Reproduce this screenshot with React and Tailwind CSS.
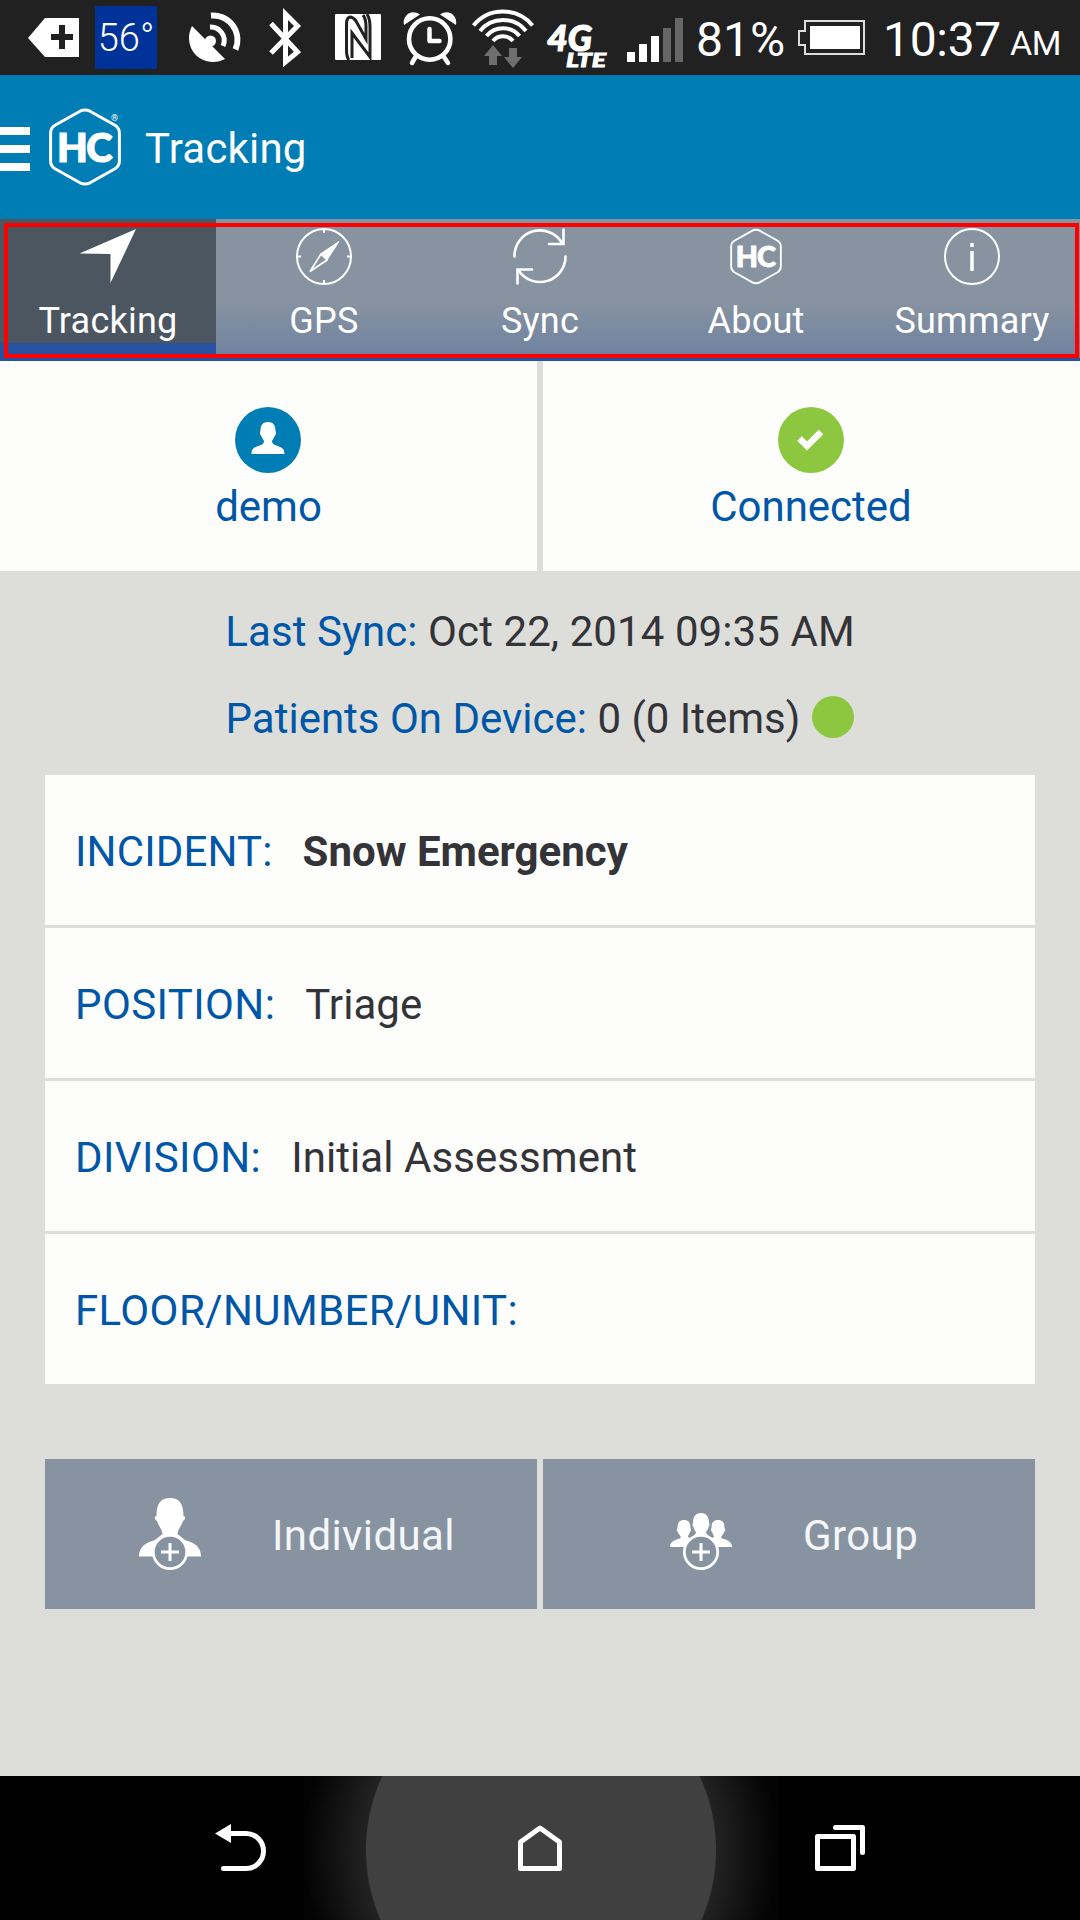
const Hex = ({ className, stroke, cls }) => (
  <svg className={className} viewBox="0 0 72 78" fill="none" stroke="white">
    <path
      strokeWidth={stroke}
      strokeLinejoin="round"
      d="M31 3.2 Q36 .6 41 3.2 L66 17.2 Q70.4 20 70.4 25 V53 Q70.4 58 66 60.8 L41 74.8 Q36 77.4 31 74.8 L6 60.8 Q1.6 58 1.6 53 V25 Q1.6 20 6 17.2 Z"
    />
    <text x="8" y="53.5" fontSize="39" textLength="54" lengthAdjust="spacingAndGlyphs" fill="white" stroke="white" strokeWidth="1.200" className={cls}>HC</text>
  </svg>
);

const letter = "font-['Lato',sans-serif] font-black tracking-[-1.5px]";

function StatusBar() {
  return (
    <div className="flex h-[75px] shrink-0 bg-[#212121] text-white">
      <svg className="h-[75px] w-[95px]" viewBox="0 0 95 75">
        <path fill="white" d="M28 38 L45 18 H79 V57 H45 Z" />
        <path stroke="#212121" strokeWidth="6" strokeLinecap="butt" d="M62 25 V49 M51 37 H73" />
      </svg>
      <div className="mt-[6px] flex h-[63px] w-[62px] items-center justify-center bg-[#003399] pt-[1px] text-[38px] leading-none font-light">56°</div>
      <svg className="h-[75px] w-[90px]" viewBox="157 0 90 75" fill="none" stroke="white">
        <path fill="white" stroke="none" d="M192 26 L207 41 L225 59 C214 65 199 62 192 50 C188 42 188 34 192 26 Z" />
        <circle cx="210.500" cy="41" r="5.500" fill="white" stroke="none" />
        <path strokeWidth="5" d="M210 27 A13.500 13.500 0 0 1 223 46" />
        <path strokeWidth="6" d="M211 15.500 A24.500 24.500 0 0 1 235.500 49.500" />
      </svg>
      <svg className="h-[75px] w-[75px]" viewBox="247 0 75 75" fill="none" stroke="white">
        <path strokeWidth="5" d="M271 23.500 L297.500 52 L285.500 62 V14 L297.500 26 L271 53" />
      </svg>
      <svg className="h-[75px] w-[72px]" viewBox="322 0 72 75">
        <rect x="335" y="14" width="46" height="46" rx="1" fill="white" />
        <path fill="none" stroke="#212121" strokeWidth="3" d="M349 60 Q346.500 57 346.500 50 V24 Q346.500 18 350 17 Q353 17 356 21 L366 39 V26 Q366 19 363 15 M367 14 Q370 19 370 26 V57 L352 33 V58" />
      </svg>
      <svg className="h-[75px] w-[72px]" viewBox="394 0 72 75" fill="none" stroke="white">
        <circle cx="429.700" cy="39" r="20.700" strokeWidth="4.600" />
        <path strokeWidth="4.500" strokeLinecap="round" strokeLinejoin="round" d="M429.500 29 V41 H439.500" />
        <path fill="white" stroke="none" d="M404 25 C402 16 411 8 420 14.500 Z M456 25 C458 16 449 8 440 14.500 Z" />
        <path strokeWidth="4.500" strokeLinecap="round" d="M415.500 57 L412 63 M444 57 L448 63" />
      </svg>
      <svg className="h-[75px] w-[74px]" viewBox="466 0 74 75" fill="none" stroke="white" strokeWidth="4">
        <path d="M473.500 25.500 A38 38 0 0 1 532.500 25.500 M480 31 A29.500 29.500 0 0 1 526 31 M486.500 36 A21.500 21.500 0 0 1 519.500 36 M493 41 A13 13 0 0 1 513 41" />
        <path fill="#6e6e6e" stroke="none" d="M493 45 L502 56 H497 V65 H489 V56 H484 Z M509 48 H517 V57 H522 L513 68 L504 57 H509 Z" />
      </svg>
      <svg className="h-[75px] w-[77px]" viewBox="540 0 77 75" fill="white">
        <g className="font-['Lato',sans-serif] font-black italic" stroke="white">
          <text x="547" y="51" fontSize="36" textLength="45" lengthAdjust="spacingAndGlyphs" strokeWidth="1.200">4G</text>
          <text x="566" y="67" fontSize="18" textLength="40" lengthAdjust="spacingAndGlyphs" strokeWidth=".8">LTE</text>
        </g>
      </svg>
      <svg className="h-[75px] w-[78px]" viewBox="617 0 78 75" fill="white">
        <path d="M627 52h8v10h-8z M639 44h8v18h-8z M651 36h8v26h-8z" />
        <path fill="#666" d="M663 28h8v34h-8z M675 18h8v44h-8z" />
      </svg>
      <div className="w-[100px] pt-[2px] pl-[1px] text-[48px] leading-[75px]">81%</div>
      <svg className="h-[75px] w-[88px]" viewBox="795 0 88 75">
        <path fill="none" stroke="#dcdcdc" strokeWidth="2" d="M805 21 H864 V54 H805 V45 H799 V31 H805 Z" />
        <path fill="white" d="M810 26h50v23h-50z" />
      </svg>
      <div className="w-[127px] pt-[2px] text-[48px] leading-[75px] tracking-[-0.3px]">10:37</div>
      <div className="pt-[12px] text-[34px] leading-[62px] tracking-[-0.5px]">AM</div>
    </div>
  );
}

const tabs = [
  {
    label: "Tracking",
    icon: <path fill="white" stroke="none" d="M56 1 L30.500 55 V26 L-.5 25.500 Z" />,
  },
  {
    label: "GPS",
    icon: (
      <>
        <ellipse cx="28" cy="28.500" rx="27" ry="27.500" />
        <path d="M28 1 V5 M28 52 V56 M1 28.500 H5 M51 28.500 H55" />
        <path fill="white" strokeWidth="1" d="M43 13.500 L31 32 L25 25.500 Z" />
        <path strokeWidth="1.700" d="M14 43.500 L25 26 L31 32 Z" />
      </>
    ),
  },
  {
    label: "Sync",
    icon: (
      <g strokeWidth="2.600">
        <path strokeLinecap="round" d="M2.500 28.500 A25.500 25.500 0 0 1 50 15 M53.500 28.500 A25.500 25.500 0 0 1 7 43" />
        <path strokeLinecap="round" d="M51.500 1.500 V16 H37 M5.500 55.500 V41.500 H20" />
      </g>
    ),
  },
  { label: "About" },
  {
    label: "Summary",
    icon: (
      <>
        <ellipse cx="28" cy="28.500" rx="27" ry="27.500" />
        <path strokeWidth="3.500" d="M28 15 V19 M28 23 V43" />
      </>
    ),
  },
];

function Tabs() {
  return (
    <div className="relative flex h-[142px] shrink-0 border-b-[3px] border-[#2852a0] bg-linear-to-b from-[#8793a1] from-60% to-[#6e81a0] to-100%">
      {tabs.map((t, i) => (
        <div key={t.label} className={i === 0 ? "flex h-[139px] w-[216px] flex-col items-center border-b-[15px] border-[#2852a0] bg-[#4c5660] pt-[9px]" : "flex w-[216px] flex-col items-center pt-[9px]"}>
          {t.icon ? (
            <svg className="h-[57px] w-[56px] overflow-visible" viewBox="0 0 56 57" fill="none" stroke="white" strokeWidth="2">
              {t.icon}
            </svg>
          ) : (
            <Hex className="h-[57px] w-[52px]" stroke="2.600" cls={letter} />
          )}
          <span className="mt-[15px] text-[36px] leading-[42px] tracking-[0.25px] text-white">{t.label}</span>
        </div>
      ))}
      <div className="absolute top-[4px] left-[4px] h-[135px] w-[1075px] border-4 border-[#ff0000]" />
    </div>
  );
}

const rows = [
  ["INCIDENT:", "Snow Emergency", true],
  ["POSITION:", "Triage"],
  ["DIVISION:", "Initial Assessment"],
  ["FLOOR/NUMBER/UNIT:", ""],
];

export default function App() {
  return (
    <div className="flex h-[1920px] w-[1080px] flex-col overflow-hidden bg-[#dddeda] font-['Roboto',sans-serif] text-[42px] whitespace-nowrap">
      <StatusBar />
      <header className="flex h-[144px] shrink-0 items-center bg-[#007db4] text-white">
        <div className="mt-[4px] flex w-[30px] flex-col gap-[10px]">
          <div className="h-[8px] bg-white" />
          <div className="h-[8px] bg-white" />
          <div className="h-[8px] bg-white" />
        </div>
        <div className="ml-[19px] h-[78px] w-[72px]">
          <Hex className="h-[78px] w-[72px]" stroke="3" cls={letter} />
        </div>
        <span className="mb-[59px] -ml-[10px] w-[10px] text-[9px] leading-[10px]">®</span>
        <span className="mt-[4px] ml-[24px] leading-[50px] tracking-[0.2px]">Tracking</span>
      </header>
      <Tabs />
      <div className="flex h-[210px] shrink-0 gap-[6px] text-[#0056a7]">
        <div className="flex w-[537px] flex-col items-center bg-[#fdfdfc] pt-[46px]">
          <svg className="mr-[1px] h-[66px] w-[66px]" viewBox="0 0 66 66">
            <circle cx="33" cy="33" r="33" fill="#007db4" />
            <path fill="white" d="M33 15 C39 15 40.500 19 40.500 24 C41.500 25 41 27.500 40 28.500 C39 31 37.500 33 37 34 C37 36 38 37 40 38 C46 40 49.500 41 49.500 47 H16.500 C16.500 41 20 40 26 38 C28 37 29 36 29 34 C28.500 33 27 31 26 28.500 C25 27.500 24.500 25 25.500 24 C25.500 19 27 15 33 15 Z" />
          </svg>
          <span className="mt-[8px] leading-[52px]">demo</span>
        </div>
        <div className="flex w-[537px] flex-col items-center bg-[#fdfdfc] pt-[46px]">
          <svg className="mr-[1px] h-[66px] w-[66px]" viewBox="0 0 66 66">
            <circle cx="33" cy="33" r="33" fill="#8dc73f" />
            <path fill="none" stroke="white" strokeWidth="6.500" d="M21.500 31.500 L29 39 L43 25" />
          </svg>
          <span className="mt-[8px] mr-[1px] leading-[52px]">Connected</span>
        </div>
      </div>
      <div className="flex h-[204px] shrink-0 flex-col items-center text-[#333338]">
        <div className="mt-[34px] leading-[54px] tracking-[0.08px]">
          <span className="text-[#0056a7]">Last Sync:</span> Oct 22, 2014 09:35 AM
        </div>
        <div className="mt-[33px] flex items-center leading-[54px]">
          <div>
            <span className="text-[#0056a7]">Patients On Device:</span> 0 (0 Items)
          </div>
          <div className="mb-[5px] ml-[12px] h-[42px] w-[42px] rounded-full bg-[#8dc73f]" />
        </div>
      </div>
      <div className="mx-[45px] flex shrink-0 flex-col gap-[3px]">
        {rows.map(([k, v, strong]) => (
          <div key={k} className="flex h-[150px] items-center bg-[#fdfdfc] pt-[3px] pl-[30px] text-[#333338]">
            <span className={strong ? "tracking-[0.15px] text-[#0056a7]" : "tracking-[0.4px] text-[#0056a7]"}>{k}</span>
            <span className={strong ? "ml-[30px] font-bold" : "ml-[30px] tracking-[0.07px]"}>{v}</span>
          </div>
        ))}
      </div>
      <div className="mx-[45px] mt-[75px] flex h-[150px] shrink-0 gap-[6px] text-[#f4f6f8]">
        <div className="flex w-[492px] items-center bg-[#8793a1] pl-[94px]">
          <svg className="-mt-[1px] h-[72px] w-[62px]" viewBox="0 0 62 72">
            <path fill="white" d="M31 0 C40 0 44.500 5 44.500 18 C47 18 46.500 22 44 23 C42 29 38.500 32 38.500 36 L46 42 C56 45 62 49 62 58.500 H0 C0 49 6 45 16 42 L23.500 36 C23.500 32 20 29 18 23 C15.500 22 15 18 17.500 18 C17.500 5 22 0 31 0 Z" />
            <circle cx="31" cy="54" r="16.700" fill="#8793a1" stroke="white" strokeWidth="2.700" />
            <path stroke="white" strokeWidth="3" d="M31 45 V63 M22 54 H40" />
          </svg>
          <span className="mt-[3px] ml-[71px] tracking-[0.4px]">Individual</span>
        </div>
        <div className="flex w-[492px] items-center bg-[#8793a1] pl-[127px]">
          <svg className="mt-[14px] h-[57px] w-[62px]" viewBox="0 0 62 57" fill="white">
            <path d="M31 0 C36.500 0 39 4 39 10 C40 11 39.500 13 38.500 14 C38 17 36 18 36 20 L40 25 H22 L26 20 C26 18 24 17 23.500 14 C22.500 13 22 11 23 10 C23 4 25.500 0 31 0 Z" />
            <path d="M14 7 C19 7 20.500 10 20.500 15 C21.500 16 21 18 20 19 C19.500 21 18 22 18 24 L22 26 V34 H0 C0 29 4 27 10 25.500 C11 25 11 23 9.500 22 C8 20 8 19 7.500 18.500 C6.500 18 6.500 16 7.500 15 C7.500 10 9 7 14 7 Z" />
            <path d="M48 7 C43 7 41.500 10 41.500 15 C40.500 16 41 18 42 19 C42.500 21 44 22 44 24 L40 26 V34 H62 C62 29 58 27 52 25.500 C51 25 51 23 52.500 22 C54 20 54 19 54.500 18.500 C55.500 18 55.500 16 54.500 15 C54.500 10 53 7 48 7 Z" />
            <circle cx="31" cy="39" r="16.700" fill="#8793a1" stroke="white" strokeWidth="2.700" />
            <path stroke="white" strokeWidth="3" d="M31 30 V48 M22 39 H40" />
          </svg>
          <span className="mt-[3px] ml-[71px] tracking-[0.4px]">Group</span>
        </div>
      </div>
      <nav className="relative mt-auto flex h-[144px] shrink-0 items-center bg-black">
        <div className="absolute top-0 left-[304px] h-[144px] w-[474px] overflow-hidden">
          <div className="absolute top-[-163px] left-0 h-[474px] w-[474px] bg-[radial-gradient(circle_closest-side,#404040_73.600%,#222222_74.100%,#030303_100%)]" />
        </div>
        <svg className="relative ml-[210px] h-[60px] w-[60px]" viewBox="210 1818 60 60" fill="none" stroke="white" strokeWidth="5" strokeLinecap="round">
          <path d="M228 1833.500 H246 A17.500 17.500 0 0 1 246 1868.500 H223.500" />
          <path fill="white" stroke="none" d="M215 1833.500 L231 1824 V1843 Z" />
        </svg>
        <svg className="relative ml-[240px] h-[60px] w-[60px]" viewBox="510 1818 60 60" fill="none" stroke="white" strokeWidth="5" strokeLinejoin="round">
          <path d="M520.500 1842 L540 1828 L559.500 1842 V1868.500 H520.500 Z" />
        </svg>
        <svg className="relative ml-[240px] h-[60px] w-[60px]" viewBox="810 1818 60 60" fill="none" stroke="white" strokeWidth="5" strokeLinejoin="round" strokeLinecap="round">
          <path d="M817.500 1836.500 H853.500 V1868.500 H817.500 Z M835.500 1827.500 H862.500 V1852.500" />
        </svg>
      </nav>
    </div>
  );
}
